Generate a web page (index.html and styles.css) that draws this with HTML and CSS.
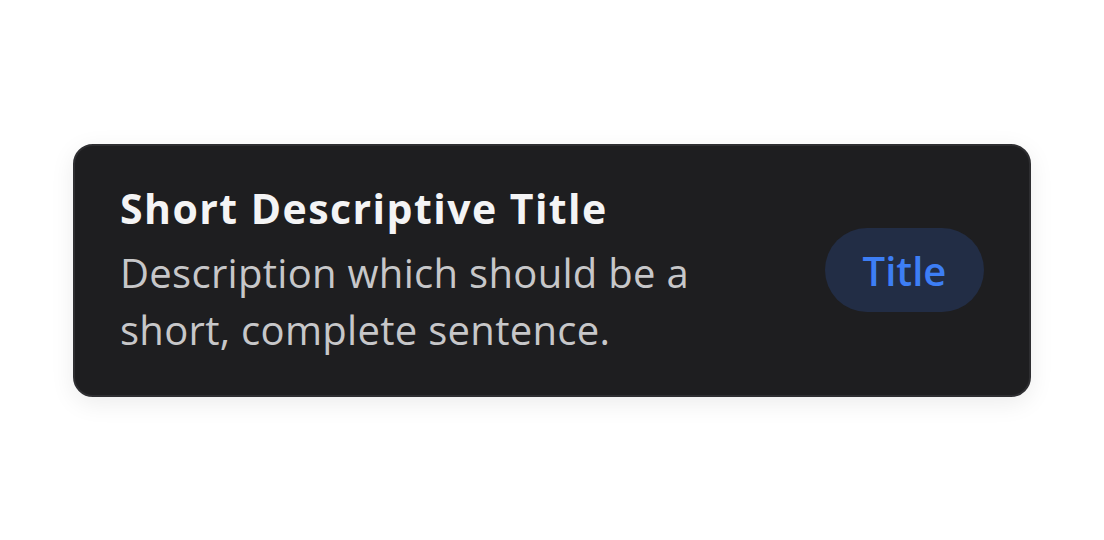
FILE: index.html
```html
<!DOCTYPE html>
<html lang="en">
<head>
    <meta charset="UTF-8">
    <meta name="viewport" content="width=device-width, initial-scale=1.0">
    <title>Card</title>
    <link rel="stylesheet" href="styles.css">
</head>
<body>
    <div class="card">
        <div class="card-text">
            <h2 class="card-title">Short Descriptive Title</h2>
            <p class="card-desc">Description which should be a<br>short, complete sentence.</p>
        </div>
        <button class="pill-button">Title</button>
    </div>
</body>
</html>
```

FILE: styles.css
```css
body {
    margin: 0;
    padding: 0;
    height: 540px;
    background-color: #ffffff;
    font-family: 'Open Sans', 'Noto Sans', sans-serif;
    display: flex;
    align-items: center;
    justify-content: center;
}

.card {
    width: 958px;
    height: 253px;
    box-sizing: border-box;
    background-color: #1e1e20;
    border: 2px solid #2e2e31;
    border-radius: 20px;
    box-shadow: 0 6px 24px rgba(0, 0, 0, 0.08);
    padding: 0 45px;
    display: flex;
    align-items: center;
    justify-content: space-between;
}

.card-title {
    margin: 0;
    font-size: 41px;
    font-weight: 700;
    line-height: 52px;
    letter-spacing: 1.45px;
    color: #f4f4f5;
}

.card-desc {
    margin: 10px 0 0;
    font-size: 40px;
    font-weight: 400;
    line-height: 57px;
    letter-spacing: 0.3px;
    color: #c7c7c9;
}

.pill-button {
    width: 159px;
    height: 84px;
    border: none;
    border-radius: 42px;
    background-color: #222d45;
    color: #3d7ef5;
    font-family: 'Open Sans', 'Noto Sans', sans-serif;
    font-size: 40px;
    font-weight: 600;
    padding: 0;
    cursor: pointer;
}
```
